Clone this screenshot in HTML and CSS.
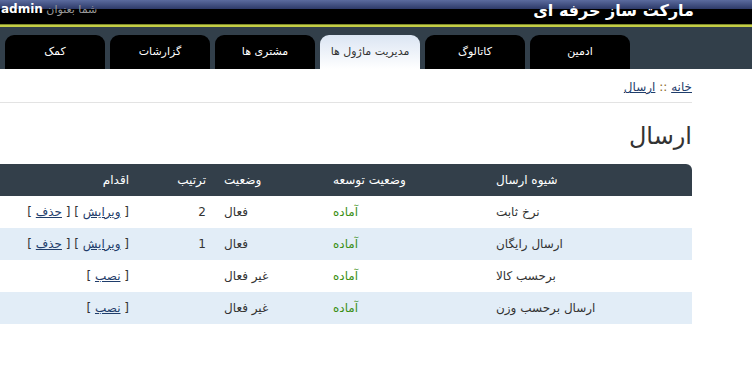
FILE: index.html
```html
<!DOCTYPE html>
<html lang="fa" dir="rtl">
<head>
  <meta charset="UTF-8">
  <title>مارکت ساز حرفه ای</title>
  <link rel="stylesheet" href="styles.css">
</head>
<body>

<div class="header">
  <div class="wrap topbar">
    <div class="logo">مارکت ساز حرفه ای</div>
    <div class="user">شما بعنوان <b>admin</b></div>
  </div>
</div>

<div class="menu">
  <div class="wrap tabs">
    <a class="tab" href="#">ادمین</a>
    <a class="tab" href="#">کاتالوگ</a>
    <a class="tab active" href="#">مدیریت ماژول ها</a>
    <a class="tab" href="#">مشتری ها</a>
    <a class="tab" href="#">گزارشات</a>
    <a class="tab" href="#">کمک</a>
  </div>
</div>

<div class="wrap content">
  <div class="breadcrumb">
    <a href="#">خانه</a> <span class="sep">::</span> <a href="#">ارسال</a>
  </div>

  <h1>ارسال</h1>

  <table class="list">
    <thead>
      <tr>
        <th class="c-name">شیوه ارسال</th>
        <th class="c-dev">وضعیت توسعه</th>
        <th class="c-status">وضعیت</th>
        <th class="c-order">ترتیب</th>
        <th class="c-action">اقدام</th>
      </tr>
    </thead>
    <tbody>
      <tr>
        <td class="c-name">نرخ ثابت</td>
        <td class="c-dev ready">آماده</td>
        <td class="c-status">فعال</td>
        <td class="c-order">2</td>
        <td class="c-action">[ <a href="#">ویرایش</a> ] [ <a href="#">حذف</a> ]</td>
      </tr>
      <tr class="odd">
        <td class="c-name">ارسال رایگان</td>
        <td class="c-dev ready">آماده</td>
        <td class="c-status">فعال</td>
        <td class="c-order">1</td>
        <td class="c-action">[ <a href="#">ویرایش</a> ] [ <a href="#">حذف</a> ]</td>
      </tr>
      <tr>
        <td class="c-name">برحسب کالا</td>
        <td class="c-dev ready">آماده</td>
        <td class="c-status">غیر فعال</td>
        <td class="c-order"></td>
        <td class="c-action">[ <a href="#">نصب</a> ]</td>
      </tr>
      <tr class="odd">
        <td class="c-name">ارسال برحسب وزن</td>
        <td class="c-dev ready">آماده</td>
        <td class="c-status">غیر فعال</td>
        <td class="c-order"></td>
        <td class="c-action">[ <a href="#">نصب</a> ]</td>
      </tr>
    </tbody>
  </table>
</div>

</body>
</html>
```

FILE: styles.css
```css
body {
  margin: 0;
  font-family: 'DejaVu Sans', sans-serif;
  font-size: 12px;
  color: #333;
  background-color: #fff;
}

.wrap {
  width: 694px;
  margin-left: 0;
  margin-right: auto;
}

.header {
  height: 24px;
  background: linear-gradient(#5b6b9e 0, #2d3a68 9px, #000 9px);
}

.topbar {
  display: flex;
  justify-content: space-between;
  align-items: flex-start;
  height: 24px;
}

.logo {
  color: #fff;
  font-size: 16px;
  font-weight: bold;
  line-height: 20px;
  padding-top: 1px;
}

.user {
  color: #999;
  font-size: 11px;
  line-height: 18px;
  padding-left: 1px;
}

.user b {
  color: #fff;
  font-size: 12px;
}

.menu {
  background-color: #323f4a;
  border-top: 1px solid #7f8a2c;
  padding-top: 2px;
  box-shadow: inset 0 2px 0 #c4cd45;
}

.tabs {
  display: flex;
  gap: 5px;
  padding-top: 8px;
  padding-right: 64px;
  box-sizing: border-box;
}

.tab {
  width: 100px;
  height: 34px;
  line-height: 34px;
  text-align: center;
  color: #fff;
  background-color: #000;
  border-radius: 9px 9px 0 0;
  text-decoration: none;
  font-size: 11px;
}

.tab.active {
  color: #333;
  background: linear-gradient(#dbe5f3, #fff);
}

.breadcrumb {
  height: 34px;
  padding-top: 11px;
  box-sizing: border-box;
  border-bottom: 1px solid #e3e3e3;
  line-height: 14px;
  margin-right: 2px;
}

.breadcrumb a {
  color: #1f3d6b;
}

.sep {
  color: #8a6a2a;
}

h1 {
  margin: 0;
  padding: 18px 0 0;
  height: 61px;
  box-sizing: border-box;
  font-size: 24px;
  font-weight: normal;
  line-height: 30px;
  color: #333;
  margin-right: 2px;
}

.list {
  width: 692px;
  margin-right: 2px;
  border-collapse: collapse;
  table-layout: fixed;
}

.list th {
  background-color: #333f4a;
  color: #fff;
  font-weight: normal;
  height: 32px;
  padding: 0 8px;
}

.list thead th:first-child {
  border-radius: 0 6px 0 0;
}

.list td {
  height: 32px;
  padding: 0 8px;
}

.list tr.odd td {
  background-color: #e2edf7;
}

.c-name { width: 188px; text-align: left; }
.c-dev { width: 147px; text-align: left; }
.c-status { width: 93px; text-align: left; }
.c-order { width: 61px; text-align: right; }
.c-action { text-align: right; }

.list th.c-order,
.list td.c-order {
  padding-right: 10px;
}

.ready {
  color: #3a8f14;
}

.c-action a {
  color: #1f3d6b;
}
```
